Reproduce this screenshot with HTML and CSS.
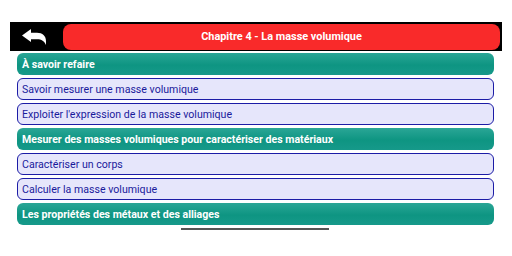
FILE: index.html
```html
<!DOCTYPE html>
<html lang="fr">
<head>
<meta charset="utf-8">
<link rel="stylesheet" href="styles.css">
</head>
<body>
<div class="header">
  <div class="back">
    <svg width="24" height="16" viewBox="0 0 24 16"><path d="M0 6.5 L9 0 L9 3.8 L15 3.8 C20.5 3.8 24 7 24 12 L24 16 C22.5 12 19.5 10.2 15 10.2 L9 10.2 L9 13 Z" fill="#fff"/></svg>
  </div>
  <div class="title">Chapitre 4 - La masse volumique</div>
</div>
<div class="list">
  <div class="row section">À savoir refaire</div>
  <div class="row item">Savoir mesurer une masse volumique</div>
  <div class="row item">Exploiter l'expression de la masse volumique</div>
  <div class="row section">Mesurer des masses volumiques pour caractériser des matériaux</div>
  <div class="row item">Caractériser un corps</div>
  <div class="row item">Calculer la masse volumique</div>
  <div class="row section">Les propriétés des métaux et des alliages</div>
</div>
<div class="home"></div>
</body>
</html>
```
FILE: styles.css
```css
html, body {
  margin: 0;
  padding: 0;
  background: #fff;
  font-family: Roboto, "Liberation Sans", sans-serif;
}
body {
  width: 512px;
  height: 256px;
  overflow: hidden;
}
.header {
  margin: 22px 0 0 10px;
  width: 492px;
  height: 29px;
  background: #000;
  display: flex;
  align-items: center;
}
.back {
  width: 53px;
  display: flex;
  justify-content: center;
  padding-right: 6px;
  box-sizing: border-box;
  padding-top: 1px;
}
.title {
  flex: 1;
  margin-right: 2px;
  height: 26px;
  background: #f92a2a;
  border-radius: 8px;
  color: #fff;
  font-weight: bold;
  font-size: 10.9px;
  display: flex;
  align-items: center;
  justify-content: center;
}
.list {
  margin: 2px 0 0 17px;
  width: 477px;
  display: flex;
  flex-direction: column;
  gap: 3px;
}
.row {
  height: 22px;
  box-sizing: border-box;
  border-radius: 6px;
  font-size: 10.6px;
  display: flex;
  align-items: center;
  padding-left: 5px;
}
.section {
  background: linear-gradient(#2aa696, #0e9582 55%, #16998a);
  color: #fff;
  font-weight: bold;
}
.item {
  background: #e6e6fb;
  border: 1px solid #1c1ca6;
  color: #1a1a9c;
  padding-left: 4px;
}
.home {
  margin: 3px 0 0 181px;
  width: 148px;
  height: 2px;
  background: #555;
}
```
